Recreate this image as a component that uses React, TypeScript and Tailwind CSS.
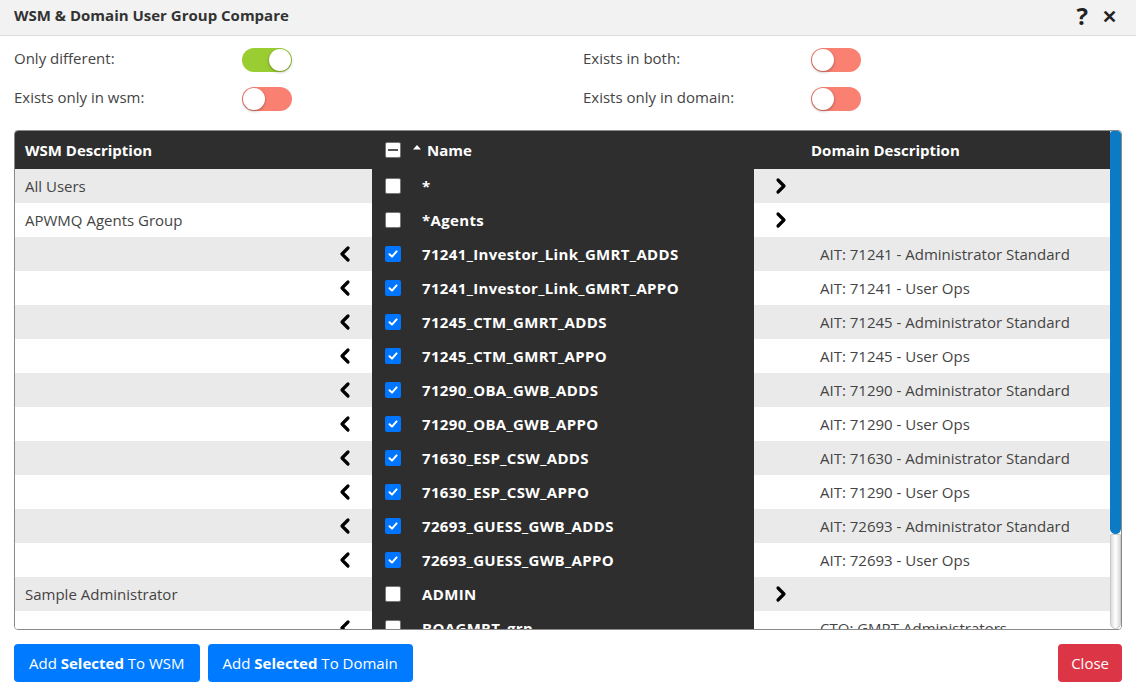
import React from 'react';

type Row = {
  wsm: string;
  name: string;
  domain: string;
  checked: boolean;
  dir: 'left' | 'right';
};

const rows: Row[] = [
  { wsm: 'All Users', name: '*', domain: '', checked: false, dir: 'right' },
  { wsm: 'APWMQ Agents Group', name: '*Agents', domain: '', checked: false, dir: 'right' },
  { wsm: '', name: '71241_Investor_Link_GMRT_ADDS', domain: 'AIT: 71241 - Administrator Standard', checked: true, dir: 'left' },
  { wsm: '', name: '71241_Investor_Link_GMRT_APPO', domain: 'AIT: 71241 - User Ops', checked: true, dir: 'left' },
  { wsm: '', name: '71245_CTM_GMRT_ADDS', domain: 'AIT: 71245 - Administrator Standard', checked: true, dir: 'left' },
  { wsm: '', name: '71245_CTM_GMRT_APPO', domain: 'AIT: 71245 - User Ops', checked: true, dir: 'left' },
  { wsm: '', name: '71290_OBA_GWB_ADDS', domain: 'AIT: 71290 - Administrator Standard', checked: true, dir: 'left' },
  { wsm: '', name: '71290_OBA_GWB_APPO', domain: 'AIT: 71290 - User Ops', checked: true, dir: 'left' },
  { wsm: '', name: '71630_ESP_CSW_ADDS', domain: 'AIT: 71630 - Administrator Standard', checked: true, dir: 'left' },
  { wsm: '', name: '71630_ESP_CSW_APPO', domain: 'AIT: 71290 - User Ops', checked: true, dir: 'left' },
  { wsm: '', name: '72693_GUESS_GWB_ADDS', domain: 'AIT: 72693 - Administrator Standard', checked: true, dir: 'left' },
  { wsm: '', name: '72693_GUESS_GWB_APPO', domain: 'AIT: 72693 - User Ops', checked: true, dir: 'left' },
  { wsm: 'Sample Administrator', name: 'ADMIN', domain: '', checked: false, dir: 'right' },
  { wsm: '', name: 'BOAGMRT_grp', domain: 'CTO: GMRT Administrators', checked: false, dir: 'left' },
];

const Chevron = ({ dir }: { dir: 'left' | 'right' }) => (
  <svg width="14" height="18" viewBox="0 0 14 18" fill="none" stroke="#000" strokeWidth="3.2" strokeLinecap="round" strokeLinejoin="round">
    {dir === 'left' ? <path d="M10 3 L4 9 L10 15" /> : <path d="M4 3 L10 9 L4 15" />}
  </svg>
);

const Toggle = ({ on }: { on: boolean }) => (
  <div className={`relative w-[50px] h-[24px] rounded-full ${on ? 'bg-[#9acd32]' : 'bg-[#fa8072]'}`}>
    <div
      className={`absolute top-[1px] w-[22px] h-[22px] rounded-full bg-white shadow-[0_1px_3px_rgba(0,0,0,0.35)] ${on ? 'right-[1px]' : 'left-[1px]'}`}
    />
  </div>
);

const Check = ({ checked }: { checked: boolean }) =>
  checked ? (
    <div className="w-4 h-4 rounded-[2px] bg-[#0075ff] flex items-center justify-center">
      <svg width="12" height="12" viewBox="0 0 12 12" fill="none" stroke="#fff" strokeWidth="2" strokeLinecap="round" strokeLinejoin="round">
        <path d="M2.5 6.2 L5 8.6 L9.6 3.4" />
      </svg>
    </div>
  ) : (
    <div className="w-4 h-4 rounded-[2px] bg-white border border-[#767676]" />
  );

const FilterRow = ({ label, on }: { label: string; on: boolean }) => (
  <div className="flex items-center h-[39px]">
    <span className="w-[228px] text-[#444] -mt-[3px]">{label}</span>
    <Toggle on={on} />
  </div>
);

export default function App() {
  return (
    <div className="w-[1136px] h-[689px] bg-white flex flex-col text-[15px] font-['Open_Sans',sans-serif] text-[#333] overflow-hidden">
      <header className="h-[36px] flex items-center justify-between pl-[14px] pr-[19px] bg-[#f2f2f2] border-b border-[#dcdcdc]">
        <h1 className="font-bold text-[#333] text-[15px] -mt-[4px]">WSM &amp; Domain User Group Compare</h1>
        <div className="flex items-center gap-[14px] text-[#222] -mt-[4px]">
          <span className="font-bold text-[24px] leading-none">?</span>
          <span className="font-bold text-[18px] leading-none">✕</span>
        </div>
      </header>

      <div className="flex px-[14px] pt-[4px]">
        <div className="w-[569px] flex flex-col">
          <FilterRow label="Only different:" on={true} />
          <FilterRow label="Exists only in wsm:" on={false} />
        </div>
        <div className="flex flex-col">
          <FilterRow label="Exists in both:" on={false} />
          <FilterRow label="Exists only in domain:" on={false} />
        </div>
      </div>

      <div className="mx-[14px] mt-[12px] h-[500px] border border-[#8a8a8a] rounded-[4px] flex overflow-hidden">
        <div className="flex-1 flex flex-col overflow-hidden">
          <div className="h-[38px] shrink-0 flex bg-[#2e2e2e] text-white font-bold">
            <div className="w-[357px] flex items-center pl-[10px]">WSM Description</div>
            <div className="w-[382px] flex items-center pl-[13px]">
              <div className="w-4 h-4 rounded-[2px] bg-white border border-[#767676] flex items-center justify-center">
                <div className="w-[10px] h-[2px] bg-[#555]" />
              </div>
              <svg width="10" height="6" viewBox="0 0 10 6" className="ml-[11px] mr-[5px] -mt-[6px]">
                <path d="M1 5.5 L5 1 L9 5.5 Z" fill="#fff" />
              </svg>
              <span>Name</span>
            </div>
            <div className="flex-1 flex items-center pl-[57px]">Domain Description</div>
          </div>
          {rows.map((r, i) => (
            <div key={i} className={`h-[34px] shrink-0 flex ${i % 2 === 0 ? 'bg-[#eaeaea]' : 'bg-white'}`}>
              <div className="w-[357px] flex items-center justify-between pl-[10px] pr-[20px] text-[#444]">
                <span>{r.wsm}</span>
                {r.dir === 'left' && <Chevron dir="left" />}
              </div>
              <div className="w-[382px] bg-[#2e2e2e] flex items-center pl-[13px] text-white font-bold">
                <Check checked={r.checked} />
                <span className="ml-[21px] tracking-[0.35px]">{r.name}</span>
              </div>
              <div className="flex-1 flex items-center text-[#444]">
                {r.dir === 'right' ? (
                  <div className="pl-[20px]">
                    <Chevron dir="right" />
                  </div>
                ) : (
                  <span className="pl-[66px]">{r.domain}</span>
                )}
              </div>
            </div>
          ))}
        </div>
        <div className="w-[11px] shrink-0 flex flex-col bg-white">
          <div className="h-[403px] bg-[#0a7bc4] rounded-t-[3px] rounded-b-[6px]" />
          <div className="flex-1 rounded-b-[6px] border border-[#c8c8c8] bg-gradient-to-r from-[#dcdcdc] via-white to-[#dcdcdc]" />
        </div>
      </div>

      <div className="flex items-center justify-between px-[14px] mt-[14px]">
        <div className="flex gap-2">
          <button className="h-[38px] px-[15px] rounded-[4px] bg-[#007bff] text-white">
            Add <b>Selected</b> To WSM
          </button>
          <button className="h-[38px] px-[15px] rounded-[4px] bg-[#007bff] text-white">
            Add <b>Selected</b> To Domain
          </button>
        </div>
        <button className="h-[38px] px-[13px] rounded-[4px] bg-[#dc3545] text-white">Close</button>
      </div>
    </div>
  );
}
